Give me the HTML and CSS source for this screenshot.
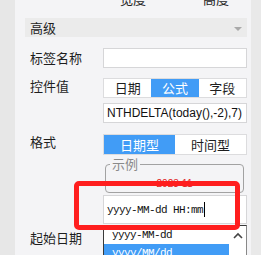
FILE: index.html
```html
<!DOCTYPE html>
<html lang="zh">
<head>
<meta charset="utf-8">
<link rel="stylesheet" href="styles.css">
</head>
<body>
<div class="app">
  <div class="lside"></div>
  <div class="panel">
    <div class="dims"><span class="dim-w">宽度</span><span class="dim-h">高度</span></div>
    <div class="section-head"><span>高级</span><i class="tri"></i></div>
    <div class="form">
      <div class="row row-a">
        <div class="label tall">标签名称</div>
        <div class="ctrl"><div class="input"></div></div>
      </div>
      <div class="row row-b">
        <div class="label">控件值</div>
        <div class="ctrl">
          <div class="seg">
            <span>日期</span><span class="on">公式</span><span>字段</span>
          </div>
          <div class="input formula">NTHDELTA(today(),-2),7)</div>
        </div>
      </div>
      <div class="row row-c">
        <div class="label">格式</div>
        <div class="ctrl">
          <div class="seg seg-fmt">
            <span class="on">日期型</span><span>时间型</span>
          </div>
          <fieldset class="sample">
            <legend>示例</legend>
            <div class="sample-text">2023-11</div>
          </fieldset>
          <div class="date-field">
            <div class="input mono">yyyy-MM-dd HH:mm<i class="cursor"></i></div>
            <div class="dropdown">
              <div class="list">
                <div class="opt">yyyy-MM-dd</div>
                <div class="opt sel">yyyy/MM/dd</div>
              </div>
              <div class="sbar"><svg width="10" height="7" viewBox="0 0 10 7"><path d="M1 6 L5 2 L9 6" fill="none" stroke="#444" stroke-width="1.6"/></svg></div>
            </div>
          </div>
        </div>
      </div>
      <div class="row row-d">
        <div class="label">起始日期</div>
        <div class="ctrl"><div class="input"></div></div>
      </div>
    </div>
    <div class="mark"></div>
  </div>
  <div class="rside"></div>
</div>
</body>
</html>
```
FILE: styles.css
```css
html, body {
  margin: 0;
  padding: 0;
}
body {
  width: 261px;
  height: 255px;
  overflow: hidden;
  font-family: "Noto Sans CJK SC", "Noto Sans", sans-serif;
  color: #1e1e1e;
  background: #e8e8e8;
}
.app {
  display: flex;
  height: 255px;
}
.lside {
  width: 15px;
  background: #e7e7e7;
}
.rside {
  flex: 1;
  background: #e9e9e9;
}
.panel {
  position: relative;
  width: 236px;
  box-sizing: border-box;
  padding: 0 4px 0 10px;
  background: #f4f4f6;
}
.dims {
  display: flex;
  height: 18px;
  font-size: 13px;
  line-height: 16px;
}
.dims span {
  margin-top: -9px;
}
.dim-w {
  margin-left: 95px;
}
.dim-h {
  margin-left: 57px;
}
.section-head {
  height: 19px;
  background: #ebebeb;
  display: flex;
  align-items: center;
  justify-content: space-between;
  padding: 0 5px;
  font-size: 13px;
  line-height: 16px;
}
.tri {
  width: 0;
  height: 0;
  border-left: 4px solid transparent;
  border-right: 4px solid transparent;
  border-top: 4px solid #a9a9a9;
  margin-top: 3px;
}
.form {
  padding-left: 5px;
}
.row {
  display: flex;
  align-items: flex-start;
}
.label {
  width: 73px;
  font-size: 13px;
  line-height: 16px;
}
.label.tall {
  line-height: 20px;
}
.ctrl {
  width: 144px;
  display: flex;
  flex-direction: column;
}
.row-a { margin-top: 11px; }
.row-b { margin-top: 10px; }
.row-c { margin-top: 11px; }
.row-d { margin-top: 6px; }
.input {
  height: 20px;
  box-sizing: border-box;
  border: 1px solid #d6d6d8;
  background: #fff;
}
.seg {
  display: flex;
  height: 20px;
  box-sizing: border-box;
  border: 1px solid #dcdcde;
  background: #fff;
}
.seg span {
  flex: 1;
  text-align: center;
  font-size: 13px;
  line-height: 18px;
}
.seg span.on {
  background: #419cf6;
  color: #fff;
}
.seg-fmt {
  height: 21px;
}
.seg-fmt span {
  line-height: 19px;
}
.formula {
  margin-top: 5px;
  font-family: "Liberation Sans", Arial, sans-serif;
  font-size: 12px;
  line-height: 18px;
  padding-left: 3px;
  white-space: nowrap;
  overflow: hidden;
  color: #111;
}
.sample {
  margin: 1px 3px 0 2px;
  padding: 6px 0 2px;
  border: 1px solid #a2a2a2;
  border-radius: 4px;
  min-width: 0;
}
.sample legend {
  margin-left: 4px;
  padding: 0 2px;
  font-size: 13px;
  line-height: 16px;
  color: #8a8a8a;
}
.sample-text {
  text-align: center;
  font-family: "Liberation Sans", Arial, sans-serif;
  font-size: 10px;
  line-height: 12px;
  color: #e02020;
}
.date-field {
  position: relative;
  margin-top: 2px;
}
.mono {
  height: 29px;
  display: flex;
  align-items: center;
  padding-left: 3px;
  font-family: "Liberation Mono", monospace;
  font-size: 11px;
  letter-spacing: -0.6px;
  color: #111;
}
.cursor {
  display: inline-block;
  width: 1px;
  height: 15px;
  background: #000;
  margin-left: 1px;
}
.dropdown {
  position: absolute;
  top: calc(100% + 1px);
  left: 0;
  right: 0;
  height: 40px;
  border: 1px solid #3a3a3a;
  border-right-color: #888;
  background: #fff;
  display: flex;
}
.list {
  flex: 1;
}
.opt {
  height: 18px;
  line-height: 18px;
  padding-left: 8px;
  font-family: "Liberation Mono", monospace;
  font-size: 11px;
  letter-spacing: -0.6px;
  color: #111;
}
.opt.sel {
  background: #419cf6;
  color: #fff;
}
.sbar {
  width: 17px;
  display: flex;
  justify-content: center;
  padding-top: 6px;
  box-sizing: border-box;
  background: #fff;
}
.mark {
  position: absolute;
  left: 59px;
  top: 181px;
  width: 166px;
  height: 49px;
  box-sizing: border-box;
  border: 5px solid #ff1e1e;
  border-radius: 5px;
}
```
